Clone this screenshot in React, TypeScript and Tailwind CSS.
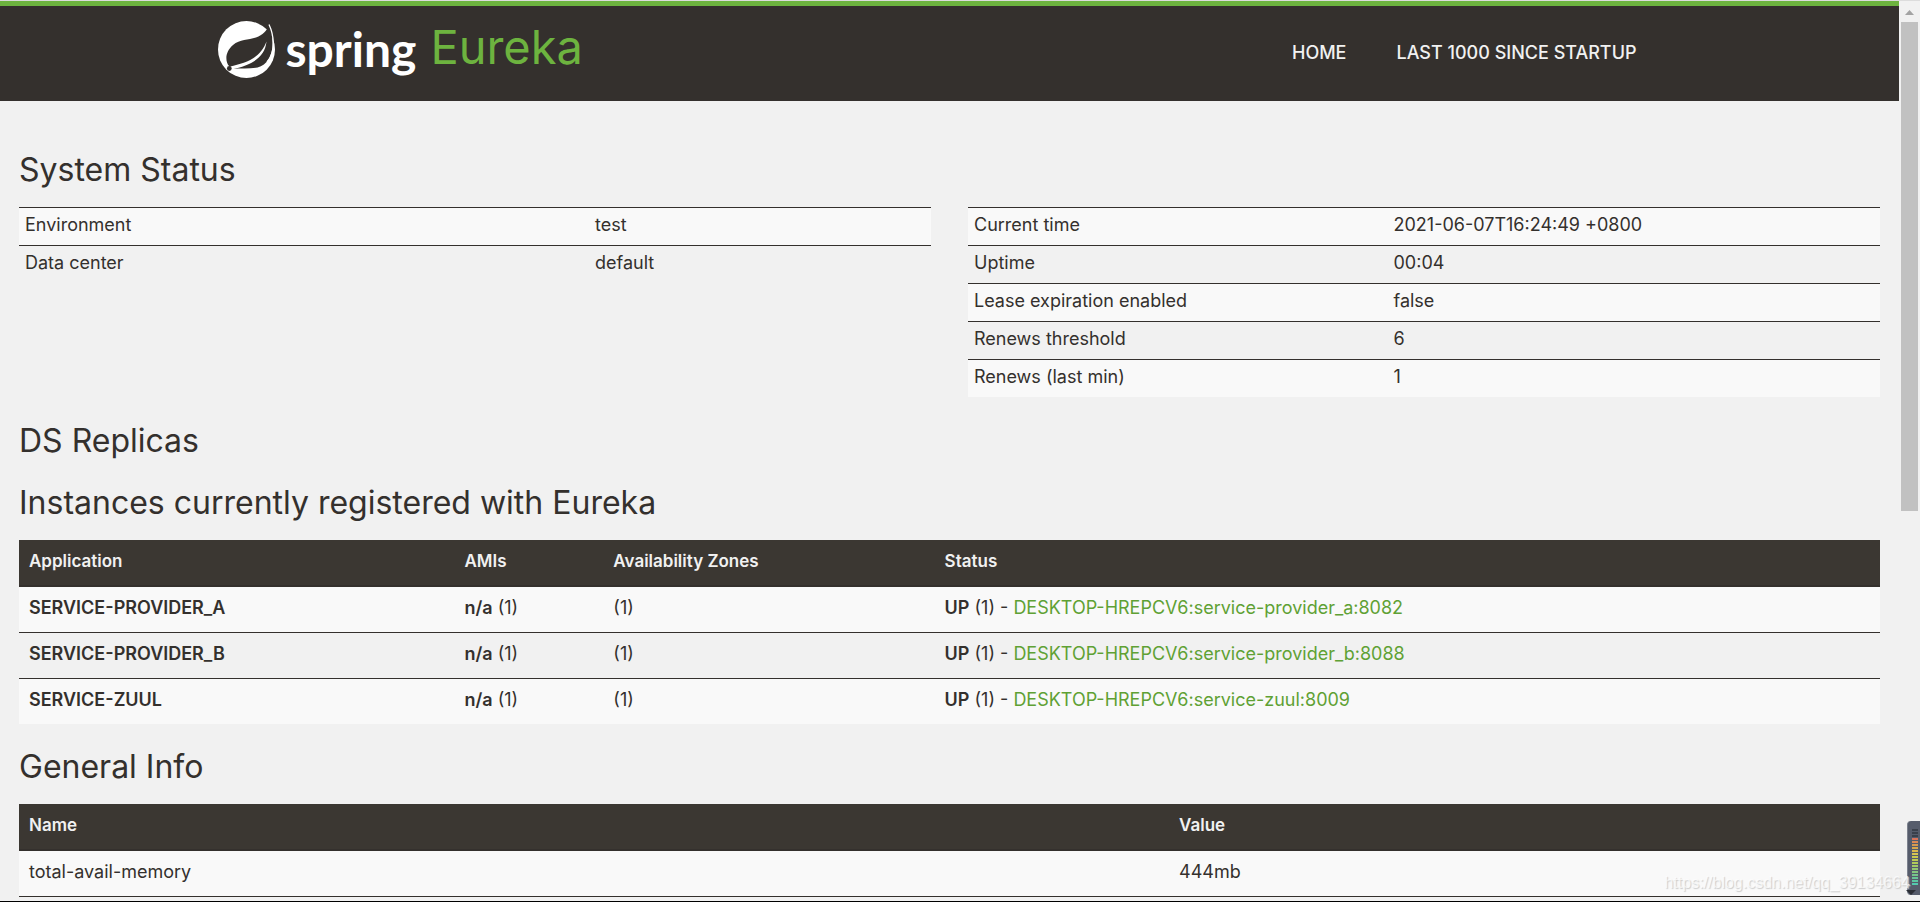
import React from 'react';

const statusLeft = [
  ['Environment', 'test'],
  ['Data center', 'default'],
];

const statusRight = [
  ['Current time', '2021-06-07T16:24:49 +0800'],
  ['Uptime', '00:04'],
  ['Lease expiration enabled', 'false'],
  ['Renews threshold', '6'],
  ['Renews (last min)', '1'],
];

const instances = [
  { app: 'SERVICE-PROVIDER_A', id: 'DESKTOP-HREPCV6:service-provider_a:8082' },
  { app: 'SERVICE-PROVIDER_B', id: 'DESKTOP-HREPCV6:service-provider_b:8088' },
  { app: 'SERVICE-ZUUL', id: 'DESKTOP-HREPCV6:service-zuul:8009' },
];

const generalInfo = [['total-avail-memory', '444mb']];

const meterBars = [
  '#3a404b', '#3a404b', '#3a404b', '#d9735a', '#dd8a55', '#d99a50', '#d9a84c', '#d9b84c', '#d6c552', '#c9c94f',
  '#bccb52', '#b0cc5a', '#a2cb66', '#93c972', '#84c77e', '#76c68a', '#68c696', '#5cc7a2', '#54c9ae',
];

const SpringLeaf = () => (
  <svg viewBox="0 0 58 58" className="size-[58px]" aria-hidden="true">
    <circle cx="28.500" cy="28.500" r="28.500" fill="#fff" />
    <path
      d="M51 4C48.500 10 45 14 38 16.500C30 19 22 18 15 24C7 31 7 40 11 45L14 48C28 46.500 41 50 48.500 41C57 31 55.500 16 51 4Z"
      fill="#34302d"
    />
    <path d="M51 4C53 9 54 13 56 20L58 20L56 8Z" fill="#34302d" />
    <path d="M51 3.500C55 12 59 30 49 41" fill="none" stroke="#fff" strokeWidth="1.300" />
    <path d="M12 45.500C27 42 42 38 48.500 20.500C47 35 36 44 13 48.500Z" fill="#fff" />
    <circle cx="11.300" cy="47.500" r="2.400" fill="#34302d" />
  </svg>
);

const Header = () => (
  <header className="border-t-5 border-[#6db33f] bg-[#34302d]">
    <div className="mx-auto flex h-[95px] w-[1464px] max-w-full items-start justify-between">
      <a href="#" className="flex items-start pt-[15px]">
        <SpringLeaf />
        <span className="ml-2.5 font-[Lato] text-[48px] leading-[56px] font-bold text-white">spring</span>
        <span className="ml-3.5 font-[Inter] text-[47px] leading-[52px] text-[#6db33f]">Eureka</span>
      </a>
      <nav className="flex pt-[31px] pr-5 font-[Inter] text-[18px] leading-8 font-medium text-[#f1f1f1] uppercase">
        <a href="#" className="px-[25px]">Home</a>
        <a href="#" className="px-[25px]">Last 1000 since startup</a>
      </nav>
    </div>
  </header>
);

const Heading = ({ children }: { children: React.ReactNode }) => (
  <h1 className="mt-6 mb-[18px] font-[Inter] text-[32px] leading-[38px] font-normal">{children}</h1>
);

const StatusTable = ({ rows, labelWidth }: { rows: string[][]; labelWidth: string }) => (
  <table className="w-full table-fixed border-separate border-spacing-0 self-start">
    <tbody>
      {rows.map(([label, value]) => (
        <tr key={label} className="odd:bg-[#f9f9f9]">
          <td className={`h-[38px] border-t border-[#34302d] px-1.5 pb-[3px] ${labelWidth}`}>{label}</td>
          <td className="h-[38px] border-t border-[#34302d] px-1.5 pb-[3px]">{value}</td>
        </tr>
      ))}
    </tbody>
  </table>
);

const headCell = 'h-[46px] border-b border-[#34302d] px-2.5 pb-[3px] text-left text-[17px] font-semibold';
const bodyCell = 'h-[46px] border-t border-[#34302d] px-2.5 pb-[3px]';

const Scrollbar = () => (
  <div className="flex w-[21px] shrink-0 flex-col items-center bg-[#f1f1f1]" aria-hidden="true">
    <svg viewBox="0 0 17 21" className="h-[21px] w-[17px] shrink-0">
      <path d="M4 14L8.500 9L13 14Z" fill="#a3a3a3" />
    </svg>
    <div className="h-[489px] w-[17px] bg-[#c1c1c1]" />
  </div>
);

const Meter = () => (
  <div className="absolute right-0 bottom-1.5 h-[74px] w-[13px] rounded-l border-l border-[#7d828e] bg-[#565c6b] pt-2 pl-1" aria-hidden="true">
    {meterBars.map((color, i) => (
      <div key={i} className="mb-px h-0.5 w-1.5" style={{ backgroundColor: color }} />
    ))}
    <svg viewBox="0 0 10 5" className="absolute bottom-0 -left-0.5 h-[5px] w-2.5">
      <path d="M0 0H10L5 5Z" fill="#2b2e36" />
    </svg>
  </div>
);

const App = () => {
  return (
    <div className="relative flex h-screen overflow-hidden border-t border-b border-t-[#dcdcdc] border-b-black bg-[#f1f1f1] font-[Inter,sans-serif] text-[18px] leading-6 text-[#34302d]">
      <div className="min-w-0 flex-1 overflow-hidden">
        <Header />
        <main className="px-[19px] pt-[26px]">
          <Heading>System Status</Heading>
          <div className="grid grid-cols-2 gap-[37px] pb-px">
            <StatusTable rows={statusLeft} labelWidth="w-[62.5%]" />
            <StatusTable rows={statusRight} labelWidth="w-[46%]" />
          </div>

          <Heading>DS Replicas</Heading>
          <Heading>Instances currently registered with Eureka</Heading>
          <table className="w-full table-fixed border-separate border-spacing-0">
            <thead>
              <tr className="bg-[#3b3732] text-[#f1f1f1]">
                <th className={`w-[23.4%] ${headCell}`}>Application</th>
                <th className={`w-[8%] ${headCell}`}>AMIs</th>
                <th className={`w-[17.8%] ${headCell}`}>Availability Zones</th>
                <th className={headCell}>Status</th>
              </tr>
            </thead>
            <tbody>
              {instances.map(({ app, id }) => (
                <tr key={app} className="odd:bg-[#f9f9f9]">
                  <td className={`font-semibold ${bodyCell}`}>{app}</td>
                  <td className={bodyCell}><b className="font-semibold">n/a</b> (1)</td>
                  <td className={bodyCell}>(1)</td>
                  <td className={bodyCell}>
                    <b className="font-semibold">UP</b> (1) - <a href="#" className="text-[#5fa134]">{id}</a>
                  </td>
                </tr>
              ))}
            </tbody>
          </table>

          <Heading>General Info</Heading>
          <table className="w-full table-fixed border-separate border-spacing-0 border-b border-[#34302d]">
            <thead>
              <tr className="bg-[#3b3732] text-[#f1f1f1]">
                <th className={`w-[61.8%] ${headCell}`}>Name</th>
                <th className={headCell}>Value</th>
              </tr>
            </thead>
            <tbody>
              {generalInfo.map(([name, value]) => (
                <tr key={name} className="odd:bg-[#f9f9f9]">
                  <td className={bodyCell}>{name}</td>
                  <td className={bodyCell}>{value}</td>
                </tr>
              ))}
            </tbody>
          </table>
        </main>
      </div>
      <Scrollbar />
      <Meter />
      <p className="absolute right-2.5 bottom-1.5 font-['Liberation_Sans',sans-serif] text-[16px] text-white/70 [text-shadow:1px_1px_1px_#ccc]">
        https://blog.csdn.net/qq_39134664
      </p>
    </div>
  );
};

export default App;
